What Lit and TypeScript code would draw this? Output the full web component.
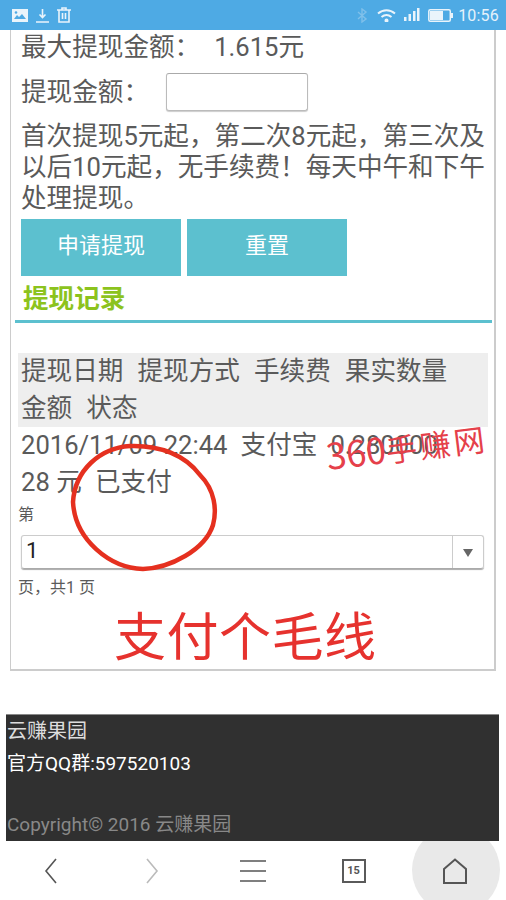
import { LitElement, html, css } from "lit";
import { customElement } from "lit/decorators.js";

@customElement("app-root")
export class AppRoot extends LitElement {
  static styles = css`
    :host { display: block; width: 506px; height: 900px; overflow: hidden; position: relative; background: #fff;
      font-family: "Roboto", "Noto Sans CJK SC", sans-serif; color: #5a5a5a; }
    .status { height: 30px; background: #4eaae4; display: flex; align-items: center; padding: 0 7px 0 12px; gap: 8px; box-sizing: border-box; }
    .status .spacer { flex: 1; }
    .status .time { font-size: 16px; color: #e6f2fb; letter-spacing: 0.2px; margin-left: -3px; }
    .card { margin: 0 10px; height: 641px; border: solid #ccc; border-width: 0 2px 2px 1px; box-sizing: border-box; padding: 0 5px 0 4px; position: relative; }
    .line { font-size: 25.6px; line-height: 34px; padding-left: 6px; }
    .l1 { height: 35px; }
    .amount { margin-left: 14px; }
    .l2 { display: flex; align-items: center; height: 38px; margin-top: 8px; }
    .input { width: 142px; height: 38px; margin-left: 17px; border: 1px solid #bbb; border-top-color: #aaa; border-radius: 3px; box-sizing: border-box; box-shadow: 0 1px 1px #ccc; background: #fff; }
    .para { font-size: 25.6px; line-height: 31px; margin: 10px 0 0; padding-left: 6px; width: 472px; box-sizing: border-box; }
    .buttons { display: flex; gap: 6px; margin: 5px 0 0 6px; }
    .btn { width: 160px; height: 57px; padding-bottom: 10px; box-sizing: border-box; background: #5cc0cf; color: #fff; font-size: 22px; display: flex; align-items: center; justify-content: center; }
    .title { font-size: 25.6px; font-weight: 700; color: #8cc31d; line-height: 46px; padding-left: 8px; height: 44px; }
    .rule { height: 3px; background: #5cc0cf; width: 477px; }
    .head { margin: 30px 0 0 3px; width: 470px; background: #eee; height: 74px; font-size: 25.6px; line-height: 37px; padding-left: 3px; box-sizing: border-box; white-space: pre; word-spacing: 0.7px; }
    .row { font-size: 25.6px; line-height: 37px; padding-left: 6px; white-space: pre; word-spacing: 0.2px; }
    .small { font-size: 16px; line-height: 24px; padding-left: 3px; }
    .ord { margin-top: 2px; }
    .select { margin: 8px 0 0 6px; width: 463px; height: 34px; border: 1px solid #ccc; border-bottom-color: #aaa; border-radius: 3px; box-sizing: border-box; display: flex; box-shadow: 0 1px 1px #aaa; }
    .select .val { flex: 1; font-size: 22px; color: #222; line-height: 29px; padding-left: 4px; }
    .select .arrow { width: 30px; border-left: 1px solid #ccc; display: flex; align-items: center; justify-content: center; }
    .tail { margin-top: 7px; }
    .footer { margin: 43px 0 0 6px; width: 493px; height: 127px; background: #303030; padding-left: 1px; box-sizing: border-box; border-top: 1px solid #888; }
    .f1 { font-size: 20px; line-height: 24px; color: #ddd; padding-top: 4px; }
    .f2 { font-size: 19px; line-height: 24px; color: #fff; margin-top: 9px; }
    .f3 { font-size: 19px; line-height: 24px; color: #888; margin-top: 37px; }
    .nav { height: 59px; display: grid; grid-template-columns: 101px 101px 101px 101px 102px; justify-items: center; align-items: center; position: relative; overflow: hidden; background: #fff; }
    .nav svg { position: relative; display: block; }
    .circle { position: absolute; left: 412px; top: -15px; width: 88px; height: 88px; border-radius: 50%; background: #e9e9e9; }
    .tab { width: 24px; height: 24px; border: 2px solid #5a5a5a; box-sizing: border-box; font-size: 11px; font-weight: 700; color: #555; display: flex; align-items: center; justify-content: center; }
    .mark { position: absolute; color: #e8333a; font-family: "Noto Sans CJK SC", sans-serif; white-space: nowrap; }
    .mark1 { left: 329px; top: 432px; font-size: 31px; font-weight: 400; line-height: 44px; transform: rotate(-7deg); transform-origin: left bottom; color: #e5404a; letter-spacing: 3px; }
    .mark1 .num { font-size: 36px; letter-spacing: 0; }
    .mark2 { left: 114px; top: 598px; font-size: 52px; line-height: 72px; color: #e6322e; letter-spacing: 0.5px; }
    .ring { position: absolute; left: 65px; top: 440px; pointer-events: none; }
  `;

  render() {
    return html`
      <div class="status">
        <svg width="16" height="13" viewBox="0 0 16 13"><rect width="16" height="13" fill="#eaf4fb"/><path d="M2 10l3-4 2 2 3-3 4 5z" fill="#4eaae4"/><circle cx="4" cy="3.500" r="1.300" fill="#4eaae4"/></svg>
        <svg width="13" height="15" viewBox="0 0 13 15" fill="none" stroke="#eaf4fb" stroke-width="1.600"><path d="M6.500 1v8M3.500 6.500l3 3 3-3M0 14h13"/></svg>
        <svg width="14" height="16" viewBox="0 0 14 16" fill="none" stroke="#eaf4fb" stroke-width="1.600"><path d="M0 3h14M5 3V1h4v2M2 3v12h10V3M5.500 6v6M8.500 6v6"/></svg>
        <span class="spacer"></span>
        <svg width="11" height="15" viewBox="0 0 11 15" fill="none" stroke="#7fc0ea" stroke-width="1.400"><path d="M1 4l8 7-4 3V1l4 3-8 7"/></svg>
        <svg style="margin-left:1px" width="19" height="13" viewBox="0 0 19 13" fill="none" stroke="#eaf4fb" stroke-width="2"><path d="M1 4.500c5-4.500 12-4.500 17 0M4.500 8c3-2.500 7-2.500 10 0"/><circle cx="9.500" cy="11.500" r="1" fill="#eaf4fb"/></svg>
        <svg width="16" height="14" viewBox="0 0 16 14" fill="#eaf4fb"><rect x="0" y="9" width="2.500" height="4"/><rect x="4.500" y="6" width="2.500" height="7"/><rect x="9" y="3" width="2.500" height="10"/><rect x="13" y="0" width="2.500" height="13"/></svg>
        <svg width="25" height="13" viewBox="0 0 25 13"><rect x="0.800" y="0.800" width="21.500" height="11.400" rx="1.500" fill="none" stroke="#eaf4fb" stroke-width="1.500"/><rect x="2" y="2" width="13" height="9" fill="#eaf4fb"/><rect x="23" y="4" width="2" height="5" fill="#eaf4fb"/></svg>
        <span class="time">10:56</span>
      </div>
      <div class="card">
        <div class="line l1">最大提现金额：<span class="amount">1.615元</span></div>
        <div class="line l2">提现金额：<div class="input"></div></div>
        <p class="para">首次提现5元起，第二次8元起，第三次及以后10元起，无手续费！每天中午和下午处理提现。</p>
        <div class="buttons"><div class="btn">申请提现</div><div class="btn">重置</div></div>
        <div class="title">提现记录</div>
        <div class="rule"></div>
        <div class="head">提现日期  提现方式  手续费  果实数量
金额  状态</div>
        <div class="row">2016/11/09 22:44  支付宝  0.280000</div>
        <div class="row">28 元  已支付</div>
        <div class="small ord">第</div>
        <div class="select"><div class="val">1</div><div class="arrow"><svg width="12" height="9" viewBox="0 0 12 9"><path d="M1 1h10L6 9z" fill="#666"/></svg></div></div>
        <div class="small tail">页，共1 页</div>
      </div>
      <div class="footer">
        <div class="f1">云赚果园</div>
        <div class="f2">官方QQ群:597520103</div>
        <div class="f3">Copyright© 2016 云赚果园</div>
      </div>
      <div class="nav">
        <div class="circle"></div>
        <svg width="14" height="26" viewBox="0 0 14 26" fill="none" stroke="#555" stroke-width="1.600"><path d="M12 1L2 13l10 12"/></svg>
        <svg width="14" height="26" viewBox="0 0 14 26" fill="none" stroke="#bbb" stroke-width="1.600"><path d="M2 1l10 12L2 25"/></svg>
        <svg width="28" height="24" viewBox="0 0 28 24" stroke="#555" stroke-width="1.700"><path d="M1 2h26M1 12h26M1 22h26"/></svg>
        <div class="tab">15</div>
        <svg width="26" height="26" viewBox="0 0 26 26" fill="none" stroke="#555" stroke-width="2"><path d="M2 11L13 1.500 24 11v14H2z"/></svg>
      </div>
      <div class="mark mark1"><span class="num">360</span>手赚网</div>
      <div class="mark mark2">支付个毛线</div>
      <svg class="ring" width="160" height="135" viewBox="0 0 160 135" fill="none" stroke="#e5301f" stroke-width="4.500"><path d="M8 62C10 30 35 8 65 6c30-1 55 9 70 29 15 15 17 35 13 50-8 25-43 43-70 44C45 128 10 100 8 62z"/></svg>
    `;
  }
}
